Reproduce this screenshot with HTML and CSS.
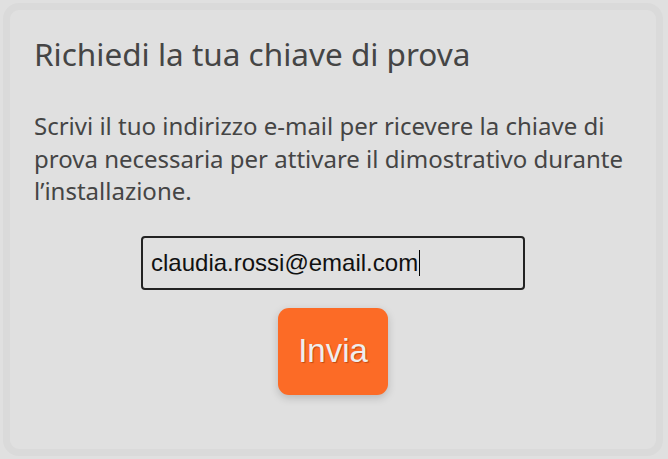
FILE: index.html
```html
<!DOCTYPE html>
<html lang="it">
<head>
  <meta charset="UTF-8">
  <title>Richiedi la tua chiave di prova</title>
  <link rel="stylesheet" href="styles.css">
</head>
<body>

  <div class="card">
    <h1>Richiedi la tua chiave di prova</h1>

    <p class="intro">Scrivi il tuo indirizzo e-mail per ricevere la chiave di prova necessaria per attivare il dimostrativo durante l’installazione.</p>

    <form class="trial-form" onsubmit="return false">
      <div class="email-field">
        <span class="email-text">claudia.rossi@email.com</span><span class="caret"></span>
      </div>
      <button type="submit" class="send-btn">Invia</button>
    </form>
  </div>

</body>
</html>
```

FILE: styles.css
```css
html, body {
  height: 100%;
}

body {
  margin: 0;
  padding: 3px 5px 3px 3px;
  box-sizing: border-box;
  background: #e0e0e0;
  font-family: 'Noto Sans', sans-serif;
  color: #444;
}

.card {
  height: 100%;
  box-sizing: border-box;
  border: 7px solid #dadada;
  border-radius: 16px;
  background: #e0e0e0;
  padding: 24px 24px;
}

h1 {
  margin: 0;
  font-size: 31.5px;
  font-weight: 400;
  line-height: 40px;
  color: #454545;
}

.intro {
  margin: 36px 0 0;
  font-size: 24px;
  line-height: 32.5px;
  color: #454545;
}

.trial-form {
  display: flex;
  flex-direction: column;
  align-items: center;
  gap: 18px;
  margin-top: 28px;
}

.email-field {
  width: 384px;
  height: 54px;
  box-sizing: border-box;
  border: 2px solid #222;
  border-radius: 4px;
  padding: 0 8px;
  display: flex;
  align-items: center;
  font-family: 'Liberation Sans', Arial, sans-serif;
  font-size: 24px;
  color: #111;
}

.caret {
  display: inline-block;
  width: 1px;
  height: 26px;
  background: #000;
  margin-left: 1px;
}

.send-btn {
  width: 110px;
  height: 87px;
  border: none;
  border-radius: 11px;
  background: #fc6b26;
  box-shadow: 0 3px 8px rgba(0, 0, 0, 0.18);
  font-family: 'Liberation Sans', Arial, sans-serif;
  font-size: 33px;
  color: #eee;
  text-shadow: 1px 1px 1px #c44a10;
  cursor: pointer;
}
```
